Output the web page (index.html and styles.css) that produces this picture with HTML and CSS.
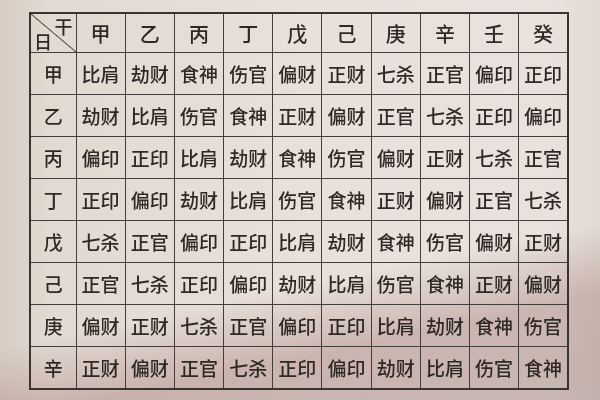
FILE: index.html
```html
<!DOCTYPE html>
<html lang="zh">
<head>
<meta charset="utf-8">
<link rel="stylesheet" href="styles.css">
</head>
<body>
<div class="paper">
<table class="gods">
<colgroup><col class="c0"><col><col><col><col><col><col><col><col><col><col></colgroup>
<tr class="head"><th class="diag"><span class="gan">干</span><span class="ri">日</span></th><th>甲</th><th>乙</th><th>丙</th><th>丁</th><th>戊</th><th>己</th><th>庚</th><th>辛</th><th>壬</th><th>癸</th></tr>
<tr><th>甲</th><td>比肩</td><td>劫财</td><td>食神</td><td>伤官</td><td>偏财</td><td>正财</td><td>七杀</td><td>正官</td><td>偏印</td><td>正印</td></tr>
<tr><th>乙</th><td>劫财</td><td>比肩</td><td>伤官</td><td>食神</td><td>正财</td><td>偏财</td><td>正官</td><td>七杀</td><td>正印</td><td>偏印</td></tr>
<tr><th>丙</th><td>偏印</td><td>正印</td><td>比肩</td><td>劫财</td><td>食神</td><td>伤官</td><td>偏财</td><td>正财</td><td>七杀</td><td>正官</td></tr>
<tr><th>丁</th><td>正印</td><td>偏印</td><td>劫财</td><td>比肩</td><td>伤官</td><td>食神</td><td>正财</td><td>偏财</td><td>正官</td><td>七杀</td></tr>
<tr><th>戊</th><td>七杀</td><td>正官</td><td>偏印</td><td>正印</td><td>比肩</td><td>劫财</td><td>食神</td><td>伤官</td><td>偏财</td><td>正财</td></tr>
<tr><th>己</th><td>正官</td><td>七杀</td><td>正印</td><td>偏印</td><td>劫财</td><td>比肩</td><td>伤官</td><td>食神</td><td>正财</td><td>偏财</td></tr>
<tr><th>庚</th><td>偏财</td><td>正财</td><td>七杀</td><td>正官</td><td>偏印</td><td>正印</td><td>比肩</td><td>劫财</td><td>食神</td><td>伤官</td></tr>
<tr><th>辛</th><td>正财</td><td>偏财</td><td>正官</td><td>七杀</td><td>正印</td><td>偏印</td><td>劫财</td><td>比肩</td><td>伤官</td><td>食神</td></tr>
</table>
</div>
</body>
</html>
```
FILE: styles.css
```css
html, body {
  margin: 0;
  padding: 0;
  width: 600px;
  height: 400px;
  overflow: hidden;
}
body {
  background:
    linear-gradient(168deg, rgba(0,0,0,0) 66%, rgba(150,100,98,0.35) 80%, rgba(120,80,80,0.3) 100%),
    linear-gradient(90deg, #d7cdc4 0%, #e2d9d1 8%, #e8e0d9 50%, #e9e2dc 92%, #e2dbd4 100%);
}
.paper {
  padding: 12px 0 0 29px;
}
.gods {
  border-collapse: collapse;
  table-layout: fixed;
  width: 540px;
  border: 2px solid #3a3431;
  font-family: "Noto Sans CJK SC", "Noto Sans CJK JP", sans-serif;
  color: #2f2925;
  filter: blur(0.35px);
}
.gods col.c0 { width: 46px; }
.gods th, .gods td {
  border: 1.5px solid #443e3a;
  height: 41px;
  padding: 0;
  text-align: center;
  vertical-align: middle;
  font-weight: 500;
  font-size: 19px;
  white-space: nowrap;
}
.gods .head th {
  height: 38px;
  font-size: 20px;
}
.gods th.diag {
  position: relative;
  background: linear-gradient(to top right, transparent calc(50% - 0.9px), #443e3a 50%, transparent calc(50% + 0.9px));
}
.gan {
  position: absolute;
  right: 3px;
  top: 3px;
  font-size: 18px;
  line-height: 18px;
}
.ri {
  position: absolute;
  left: 3px;
  bottom: 2px;
  font-size: 18px;
  line-height: 18px;
}
```
